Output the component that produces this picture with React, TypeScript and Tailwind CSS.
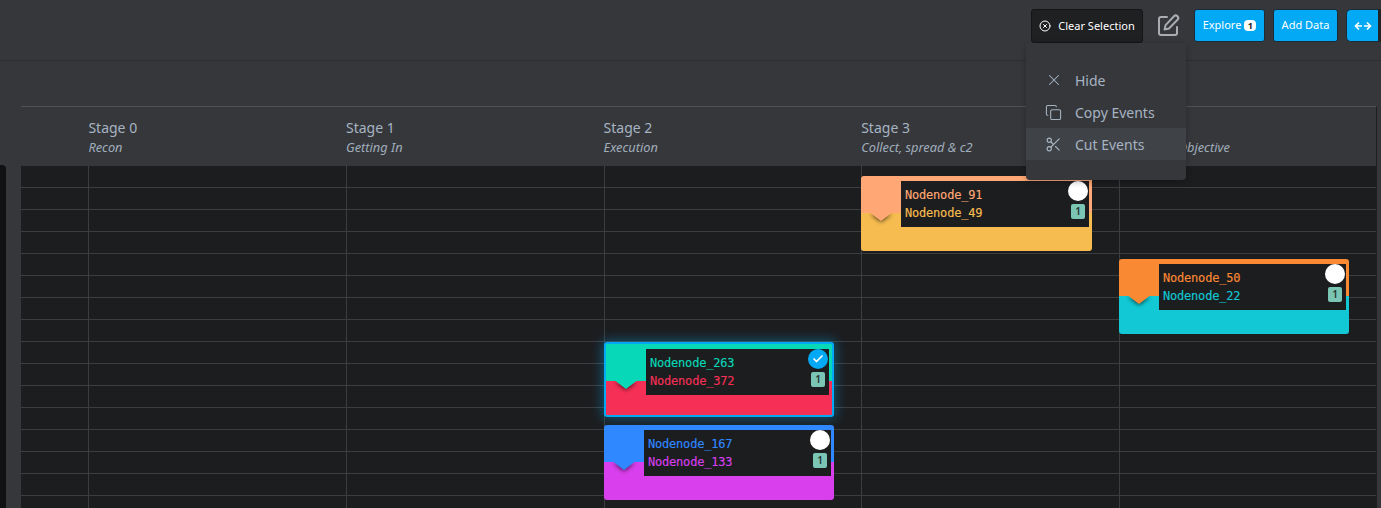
import React from "react";
import { Copy, Scissors, X, Check, CircleX } from "lucide-react";

const stages = [
  ["Stage 0", "Recon", ""],
  ["Stage 1", "Getting In", ""],
  ["Stage 2", "Execution", ""],
  ["Stage 3", "Collect, spread & c2", ""],
  ["", "Objective", "ml-[59px]"],
];

type CardProps = {
  left: number; top: number; w?: number; a: string; b: string; ca: string; cb: string;
  checked?: boolean; selected?: boolean;
};

const mono = "text-[12px] tracking-[-0.2px] leading-[14px] font-['DejaVu_Sans_Mono',monospace] [-webkit-text-stroke:0.15px_currentColor]";

function Card({ left, top, w = 230, a, b, ca, cb, checked, selected }: CardProps) {
  return (
    <div
      className={selected
        ? "absolute h-[75px] rounded-[3px] border-2 border-[#03a9f4] shadow-[0_0_12px_2px_rgba(3,169,244,0.4)]"
        : "absolute h-[75px] rounded-[3px]"}
      style={{ left, top, width: w, background: `linear-gradient(${ca} 0 37px, ${cb} 37px 100%)` }}
    >
      <svg className="absolute left-0 top-[37px] overflow-hidden" width={40} height={14} viewBox="0 0 40 14">
        <path d="M9.5 0H30.5L20 8Z" fill={ca} className="drop-shadow-[0_1px_2px_rgba(0,0,0,0.7)]" />
      </svg>
      <div className="absolute left-[40px] right-[3px] top-[5px] h-[46px] bg-[#1c1d1f] flex flex-col justify-center gap-[4px] pl-[4px]">
        <div className={mono} style={{ color: ca }}>{a}</div>
        <div className={mono} style={{ color: cb }}>{b}</div>
      </div>
      <div
        className={checked
          ? "absolute right-[4px] top-[5px] w-5 h-5 rounded-full bg-[#03a9f4] flex items-center justify-center"
          : "absolute right-[4px] top-[5px] w-5 h-5 rounded-full bg-white"}
      >
        {checked && <Check size={12} strokeWidth={3.5} className="text-white" />}
      </div>
      <div className="absolute right-[7px] top-[28px] w-[14px] h-[15px] rounded-[2px] bg-[#7ac5b4] text-[#26332f] text-[10px] leading-[15px] text-center font-semibold font-['Noto_Sans',sans-serif]">
        1
      </div>
    </div>
  );
}

export default function App() {
  return (
    <div className="relative w-[1381px] h-[508px] overflow-hidden bg-[#36373b] font-['Noto_Sans',sans-serif]">
      {/* top bar */}
      <div className="h-[61px] border-b border-[#2c2d30] flex items-start justify-end gap-[8px] pt-[9px]">
        <button className="h-[34px] w-[112px] bg-[#1f2022] border border-[#141517] rounded-[3px] text-white text-[11px] flex items-center justify-center gap-[7px]">
          <CircleX size={12} />
          Clear Selection
        </button>
        <svg className="ml-[5px] mr-[5px] mt-[4px] text-[#a9adb2]" width={25} height={25} viewBox="0 0 25 25" fill="none" stroke="currentColor" strokeWidth={2} strokeLinejoin="round" strokeLinecap="round">
          <path d="M11 4H5a2 2 0 0 0-2 2v14a2 2 0 0 0 2 2h14a2 2 0 0 0 2-2v-6" />
          <path d="M18 3.2a2 2 0 0 1 3.5 3.5L13 15.5l-4.4 1 1-4.4Z" />
        </svg>
        <button className="h-[33px] w-[71px] bg-[#03a9f4] border border-[#1c2b36] rounded-[3px] text-white text-[11px] flex items-center justify-center gap-[3px]">
          Explore
          <span className="bg-white text-[#222] rounded-[4px] w-3 h-[11px] text-[9px] leading-[11px] font-bold">1</span>
        </button>
        <button className="h-[33px] w-[65px] bg-[#03a9f4] border border-[#1c2b36] rounded-[3px] text-white text-[11px]">Add Data</button>
        <div className="flex h-[33px]">
          <button className="h-[33px] w-[32px] bg-[#03a9f4] border-l border-y border-[#1c2b36] rounded-l-[5px] text-white flex items-center justify-center">
            <svg width={18} height={10} viewBox="0 0 18 10" fill="none" stroke="currentColor" strokeWidth={1.6}>
              <path d="M8 5H1.5M5 1.5 1.5 5 5 8.5" />
              <path d="M10 5h6.5M13 1.5 16.5 5 13 8.5" />
            </svg>
          </button>
          <div className="w-[3px] h-full bg-[#232427]" />
        </div>
      </div>

      {/* second bar */}
      <div className="h-[45px]" />

      {/* board */}
      <div className="ml-[21px] w-[1356px] relative">
        <div className="h-[60px] border-t border-[#505155] border-r-[1px] border-r-[#1c1d1f] flex pl-[67.4px]">
          {stages.map(([s, d, cls], i) => (
            <div key={i} className="w-[257.6px] shrink-0 pt-[11px]">
              <div className="text-[14px] leading-[20px] text-[#a6b4c2] h-5">{s}</div>
              <div className={"text-[12.8px] leading-[17px] italic text-[#a0aebc] mt-[1px] whitespace-nowrap " + cls}>{d}</div>
            </div>
          ))}
        </div>
        <div className="h-[342px] bg-[#1c1d1f] flex bg-[repeating-linear-gradient(to_bottom,transparent_0,transparent_21px,#3c3d41_21px,#3c3d41_22px)] pl-[67.4px] border-r border-r-[#1c1d1f]">
          {stages.map((_, i) => (
            <div key={i} className="w-[257.6px] shrink-0 border-l border-[#3c3d41]" />
          ))}
        </div>

        <Card left={840} top={70} w={231} a="Nodenode_91" b="Nodenode_49" ca="#ffa875" cb="#f7bc50" />
        <Card left={1098} top={153} a="Nodenode_50" b="Nodenode_22" ca="#f98933" cb="#11c8d4" />
        <Card left={583} top={236} a="Nodenode_263" b="Nodenode_372" ca="#07d8b8" cb="#f62f56" checked selected />
        <Card left={583} top={319} a="Nodenode_167" b="Nodenode_133" ca="#2f88ff" cb="#d93fec" />
      </div>

      {/* left panel */}
      <div className="absolute left-0 top-[165px] w-[6px] h-[343px] bg-[#101112] rounded-tr-[4px]" />

      {/* menu */}
      <div className="absolute left-[1026px] top-[43px] w-[160px] h-[137px] bg-[#36373b] rounded-b-[4px] shadow-[0_2px_6px_rgba(0,0,0,0.25)] pt-[21px] text-[14px] text-[#a6b4c2]">
        <div className="h-8 flex items-center pl-[19px]"><span className="w-[30px]"><X size={18} strokeWidth={1.4} /></span><span>Hide</span></div>
        <div className="h-8 flex items-center pl-[19px]"><span className="w-[30px]"><Copy size={17} strokeWidth={1.5} /></span><span>Copy Events</span></div>
        <div className="h-8 flex items-center pl-[19px] bg-[#3f4246]"><span className="w-[30px]"><Scissors size={17} strokeWidth={1.6} /></span><span>Cut Events</span></div>
      </div>
    </div>
  );
}
